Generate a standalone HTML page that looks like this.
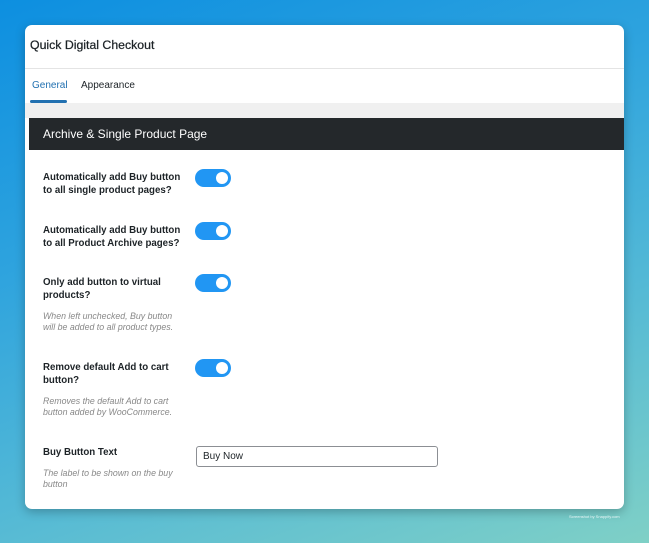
<!DOCTYPE html>
<html><head><meta charset="utf-8"><style>
html,body{margin:0;padding:0;}
body{width:649px;height:543px;overflow:hidden;position:relative;font-family:"Liberation Sans",Arial,sans-serif;
background:linear-gradient(160deg,#0d8fe0 0%,#2ea3de 35%,#52b8d6 65%,#7fd0c6 100%);}
.card{position:absolute;left:25px;top:25px;width:599px;height:484px;background:#fff;border-radius:7px;overflow:hidden;box-shadow:0 3px 10px rgba(0,0,0,.25);}
.title{position:absolute;left:5px;top:13px;font-size:12.3px;color:#1d2327;-webkit-text-stroke:0.25px #1d2327;}
.hr{position:absolute;left:0;top:43px;width:100%;height:1px;background:#e4e4e4;}
.tab{position:absolute;top:55px;font-size:10px;color:#1d2327;}
.ul{position:absolute;left:5px;top:75px;width:37px;height:3px;background:#2271b1;border-radius:2px;}
.gray{position:absolute;left:0;top:78px;width:100%;height:15px;background:#f0f0f0;}
.dark{position:absolute;left:4px;top:93px;width:595px;height:32px;background:#24282b;color:#fff;font-size:12px;line-height:32px;}
.dark span{margin-left:14px;}
.lab{position:absolute;left:18px;font-size:9.7px;font-weight:bold;color:#1d2327;line-height:13px;width:160px;}
.desc{position:absolute;left:18px;font-size:8.8px;font-style:italic;color:#888;line-height:11px;width:150px;}
.tg{position:absolute;left:170px;width:36px;height:18px;border-radius:9px;background:#2196f3;}
.tg:after{content:"";position:absolute;right:3px;top:3px;width:12px;height:12px;border-radius:50%;background:#fff;}
.inp{position:absolute;left:171px;top:421px;width:234px;height:19px;border:1px solid #8c8f94;border-radius:3px;font-size:10px;line-height:19px;padding-left:6px;box-sizing:content-box;color:#1d2327;}
.wm{position:absolute;left:569px;top:514px;font-size:4px;color:#e8f6f6;}
</style></head><body>
<div class="card">
<div class="title">Quick Digital Checkout</div>
<div class="hr"></div>
<div class="tab" style="left:7px;color:#2271b1">General</div>
<div class="tab" style="left:56px">Appearance</div>
<div class="ul"></div>
<div class="gray"></div>
<div class="dark"><span>Archive &amp; Single Product Page</span></div>
<div class="lab" style="top:146px">Automatically add Buy button<br>to all single product pages?</div>
<div class="tg" style="top:144px"></div>
<div class="lab" style="top:199px">Automatically add Buy button<br>to all Product Archive pages?</div>
<div class="tg" style="top:197px"></div>
<div class="lab" style="top:251px">Only add button to virtual<br>products?</div>
<div class="tg" style="top:249px"></div>
<div class="desc" style="top:286px">When left unchecked, Buy button<br>will be added to all product types.</div>
<div class="lab" style="top:336px">Remove default Add to cart<br>button?</div>
<div class="tg" style="top:334px"></div>
<div class="desc" style="top:371px">Removes the default Add to cart<br>button added by WooCommerce.</div>
<div class="lab" style="top:421px">Buy Button Text</div>
<div class="inp">Buy Now</div>
<div class="desc" style="top:443px">The label to be shown on the buy<br>button</div>
</div>
<div class="wm">Screenshot by Snappify.com</div>
</body></html>
